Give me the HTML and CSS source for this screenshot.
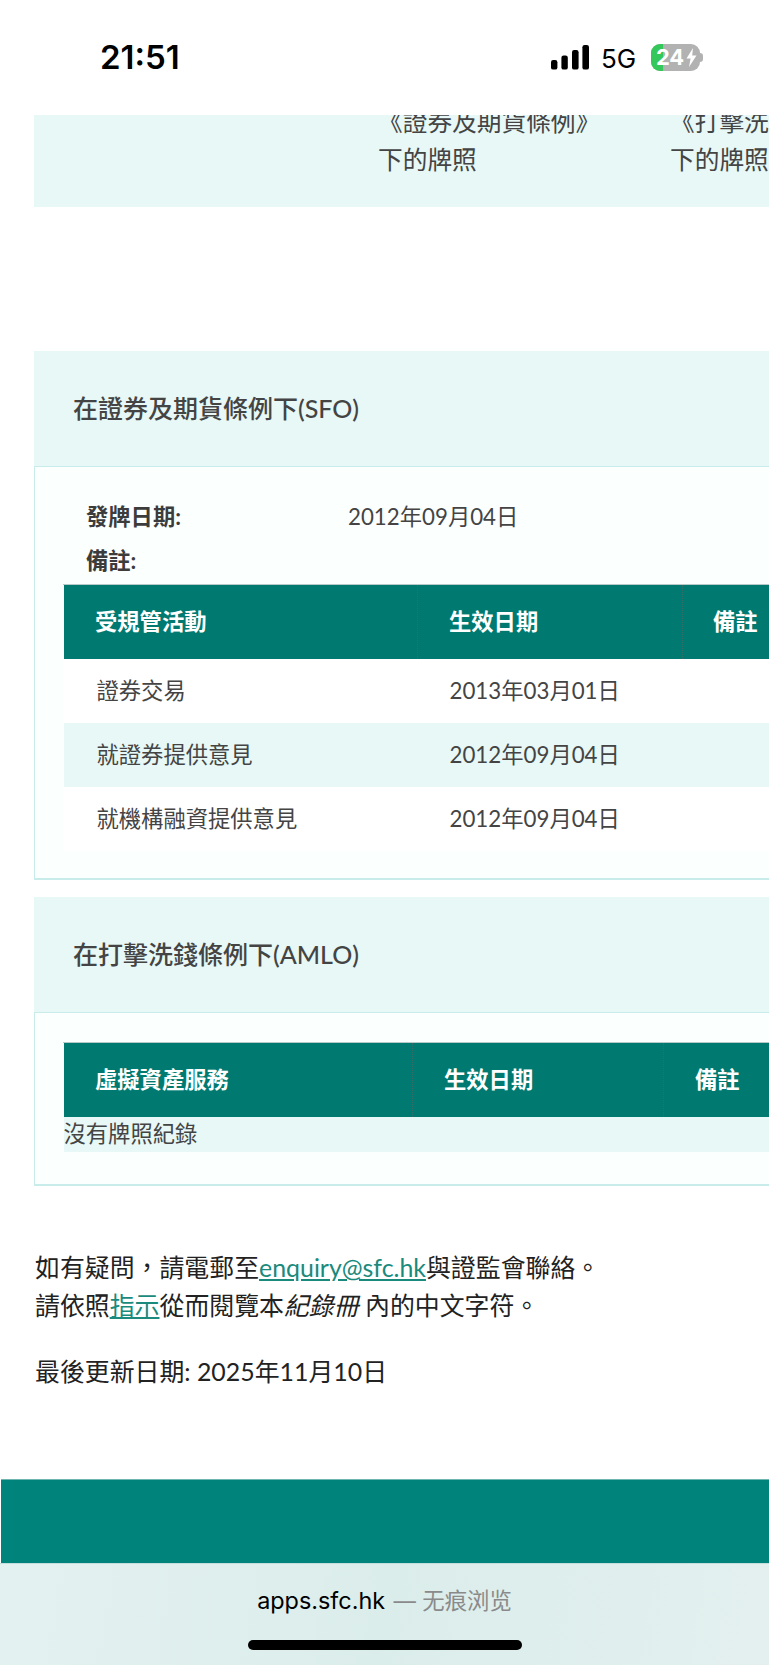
FILE: index.html
```html
<!DOCTYPE html>
<html lang="zh-Hant">
<head>
<meta charset="utf-8">
<title>SFC</title>
<link rel="stylesheet" href="styles.css">
</head>
<body>
<div class="screen">
  <header class="status">
    <span class="time">21:51</span>
    <div class="status-right">
      <svg class="signal" width="38" height="25" viewBox="0 0 38 25"><rect x="0" y="15" width="6.4" height="9.6" rx="2.2"/><rect x="10.4" y="10.6" width="6.4" height="14" rx="2.2"/><rect x="21" y="5" width="6.6" height="19.6" rx="2.2"/><rect x="31.4" y="0" width="6.6" height="24.6" rx="2.2"/></svg>
      <span class="net">5G</span>
      <div class="battery">
        <div class="battery-fill"></div>
        <span class="battery-num">24</span>
        <svg class="bolt" width="11" height="19" viewBox="0 0 11 19"><path d="M7 0 0.5 10.5H4.6L3 19 10.5 7.6H6.2Z"/></svg>
      </div>
      <div class="battery-nub"></div>
    </div>
  </header>

  <main class="content">
    <div class="top-band">
      <div class="top-band-inner">
        <div class="licence-col licence-a">《證券及期貨條例》<br>下的牌照</div>
        <div class="licence-col">《打擊洗錢條例》<br>下的牌照</div>
      </div>
    </div>

    <section class="sec sec-first">
      <h2 class="sec-title">在證券及期貨條例下(SFO)</h2>
      <div class="panel panel-sfo">
        <dl class="info">
          <dt>發牌日期:</dt><dd>2012年09月04日</dd>
          <dt>備註:</dt><dd></dd>
        </dl>
        <table class="grid grid-sfo">
          <colgroup><col class="c1"><col class="c2"><col class="c3"></colgroup>
          <thead><tr><th>受規管活動</th><th>生效日期</th><th>備註</th></tr></thead>
          <tbody>
            <tr><td>證券交易</td><td>2013年03月01日</td><td></td></tr>
            <tr class="alt"><td>就證券提供意見</td><td>2012年09月04日</td><td></td></tr>
            <tr><td>就機構融資提供意見</td><td>2012年09月04日</td><td></td></tr>
          </tbody>
        </table>
      </div>
    </section>

    <section class="sec sec-second">
      <h2 class="sec-title">在打擊洗錢條例下(AMLO)</h2>
      <div class="panel panel-amlo">
        <table class="grid grid-amlo">
          <colgroup><col class="c1"><col class="c2"><col class="c3"></colgroup>
          <thead><tr><th>虛擬資產服務</th><th>生效日期</th><th>備註</th></tr></thead>
          <tbody><tr class="alt empty"><td colspan="3">沒有牌照紀錄</td></tr></tbody>
        </table>
      </div>
    </section>

    <div class="notes">
      <p class="note">如有疑問，請電郵至<a href="#">enquiry@sfc.hk</a>與證監會聯絡。<br>請依照<a href="#">指示</a>從而閱覽本<em>紀錄冊</em> 內的中文字符。</p>
      <p class="note updated">最後更新日期: 2025年11月10日</p>
    </div>
  </main>

  <div class="page-footer"></div>

  <footer class="browser">
    <div class="address"><span class="host">apps.sfc.hk</span> <span class="mode">— 无痕浏览</span></div>
    <div class="home-bar"></div>
  </footer>
</div>
</body>
</html>
```

FILE: styles.css
```css
* { box-sizing: border-box; }
html, body { margin: 0; padding: 0; background: #fff; }
body {
  font-family: Lato, "Noto Sans CJK TC", sans-serif;
  color: #444;
}
.screen {
  width: 769px;
  height: 1665px;
  overflow: hidden;
  display: flex;
  flex-direction: column;
}

/* status bar */
.status {
  height: 115px;
  flex: none;
  display: flex;
  justify-content: space-between;
  align-items: flex-start;
  padding: 39px 66px 0 100px;
  font-family: Inter, sans-serif;
  color: #000;
}
.time { font-size: 33px; font-weight: 600; line-height: 36px; letter-spacing: 0; }
.status-right { display: flex; align-items: flex-start; padding-top: 5px; }
.signal { display: block; margin-top: 1px; fill: #000; }
.net { font-size: 26px; font-weight: 400; line-height: 26px; margin-left: 12px; margin-top: 2px; width: 50px; }
.battery {
  position: relative;
  width: 49px;
  height: 27px;
  background: #b2b2b2;
  border-radius: 9px;
  overflow: hidden;
  display: flex;
  align-items: center;
}
.battery-fill { position: absolute; left: 0; top: 0; bottom: 0; width: 12px; background: #34c759; }
.battery-num { position: relative; font-size: 22px; font-weight: 700; color: #fff; margin-left: 5px; line-height: 27px; letter-spacing: -0.3px; }
.bolt { position: relative; fill: #fff; margin-left: 2px; }
.battery-nub { width: 3px; height: 9px; margin-top: 9px; background: #b2b2b2; border-radius: 0 3px 3px 0; }

/* content */
.content { flex: none; height: 1364px; padding-left: 34px; overflow: hidden; }
.top-band { width: 900px; height: 92px; background: #e7f8f6; overflow: hidden; }
.top-band-inner {
  display: flex;
  margin-top: -12px;
  padding-left: 344px;
  font-size: 24.7px;
  line-height: 38px;
  color: #444;
}
.licence-a { width: 292px; }
.licence-col { white-space: nowrap; }

.sec { width: 900px; }
.sec-first { margin-top: 144px; }
.sec-second { margin-top: 17px; }
.sec-title {
  margin: 0;
  height: 115px;
  padding: 0 0 4px 39px;
  background: #e7f8f6;
  display: flex;
  align-items: center;
  font-size: 25px;
  font-weight: 500;
  color: #444;
}
.panel {
  background: #fbfffe;
  border: 1px solid #c8ecea;
  border-width: 1px 1px 2px 1px;
  padding-left: 28px;
}
.panel-sfo { height: 414px; }
.panel-amlo { height: 174px; padding-top: 29px; }

.info {
  margin: 0;
  padding: 26px 0 0 23px;
  height: 117px;
  display: grid;
  grid-template-columns: 262px 1fr;
  grid-auto-rows: 44px;
  align-items: center;
  font-size: 22.3px;
}
.info dt { font-weight: 700; color: #3c3c3c; }
.info dd { margin: 0; color: #444; }

.grid { border-collapse: collapse; table-layout: fixed; width: 837px; font-size: 22.3px; }
.grid th {
  height: 74px;
  background: #007a70;
  color: #fff;
  font-weight: 700;
  text-align: left;
  padding: 0 0 3px 31px;
  border-right: 1px dotted #3a6b66;
  border-top: 1px solid #b9c9c7;
}
.grid th:first-child { border-left: 1px solid #fbfffe; }
.grid th:last-child { border-right: 0; }
.grid-sfo th:last-child { padding-left: 30px; }
.grid td { height: 64px; padding: 0 0 4px 33px; background: #fff; color: #444; }
.grid td:nth-child(2) { padding-left: 32px; }
.grid .alt td { background: #e7f8f6; }
.grid .empty td { height: 35px; padding: 0 0 2px; line-height: 33px; }
.grid-sfo .c1 { width: 354px; }
.grid-sfo .c2 { width: 265px; }
.grid-amlo .c1 { width: 349px; }
.grid-amlo .c2 { width: 251px; }

.notes { padding: 62px 0 0 1px; font-size: 24.9px; color: #222; }
.note { margin: 0; line-height: 38px; white-space: nowrap; }
.note a { color: #1a8a7c; text-decoration: underline; }
.note em { font-style: italic; }
.updated { margin-top: 28px; }

/* bottom */
.page-footer { flex: none; height: 84px; margin-left: 1px; background: #00837a; border-top: 1px solid #6fb5af; }
.browser {
  flex: none;
  height: 102px;
  background: linear-gradient(100deg, #e4f1f1 0%, #dbedeb 50%, #e3f0ef 100%);
  border-top: 1px solid #c5dedb;
  display: flex;
  flex-direction: column;
  align-items: center;
  padding-top: 23px;
  font-family: Inter, "Noto Sans CJK SC", sans-serif;
}
.address { line-height: 28px; }
.host { color: #000; font-size: 23.4px; }
.mode { color: #8a8a8a; font-size: 22.4px; margin-left: 4px; }
.home-bar { width: 274px; height: 10px; margin-top: 23px; background: #000; border-radius: 5px; }
```
